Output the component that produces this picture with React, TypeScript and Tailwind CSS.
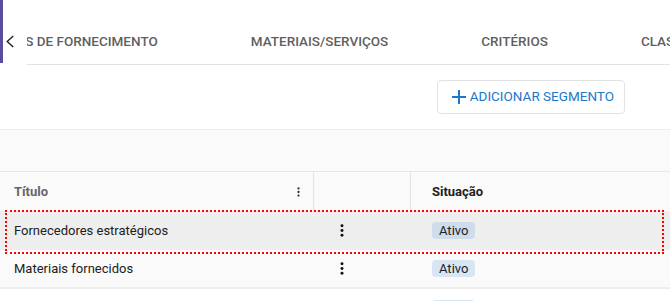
import * as React from 'react';

function Kebab({ className }: { className?: string }) {
  return (
    <svg viewBox="0 0 4 14" className={className} fill="currentColor">
      <circle cx="2" cy="2" r="1.6" />
      <circle cx="2" cy="7" r="1.6" />
      <circle cx="2" cy="12" r="1.6" />
    </svg>
  );
}

const rows = [
  { title: 'Fornecedores estratégicos', status: 'Ativo', active: true },
  { title: 'Materiais fornecidos', status: 'Ativo', active: false },
  { title: 'Segmentação', status: 'Ativo', active: false },
];

export default function App() {
  return (
    <div className="h-[301px] w-[670px] overflow-hidden bg-white font-['Roboto',sans-serif]">
      {/* Tabs */}
      <div className="flex h-[65px]">
        <div className="h-[63px] w-[3px] bg-[#5b4b9c]" />
        <button className="flex w-[24px] items-start justify-start pl-[2px] pt-[35px] text-[#212121]">
          <svg viewBox="0 0 10 14" className="h-[13px] w-[10px]" fill="none" stroke="currentColor" strokeWidth="1.5">
            <polyline points="8.5,1 2,7 8.5,13" />
          </svg>
        </button>
        <div className="flex-1 overflow-hidden border-b border-[#e3e3e3]">
          <div className="-ml-[73px] flex gap-[93px] whitespace-nowrap pt-[33px] text-[13.5px] font-medium leading-[16px] text-[#5f5f5f]">
            <span>SEGMENTOS DE FORNECIMENTO</span>
            <span>MATERIAIS/SERVIÇOS</span>
            <span>CRITÉRIOS</span>
            <span>CLASSIFICAÇÃO</span>
          </div>
        </div>
      </div>

      {/* Toolbar */}
      <div className="flex h-[64px] items-start justify-end pr-[45px] pt-[15px]">
        <button className="flex h-[34px] items-center gap-[4px] rounded-[4px] border border-[#e3e3e3] bg-white pl-[14px] pr-[10px] text-[13.5px] leading-none text-[#1e78c8]">
          <svg viewBox="0 0 14 14" className="h-[14px] w-[14px]" fill="none" stroke="currentColor" strokeWidth="2">
            <line x1="7" y1="0" x2="7" y2="14" />
            <line x1="0" y1="7" x2="14" y2="7" />
          </svg>
          ADICIONAR SEGMENTO
        </button>
      </div>

      {/* Table */}
      <div className="border-t border-[#ececec] bg-[#fafafa]">
        <div className="h-[41px]" />
        <div className="grid h-[40px] grid-cols-[314px_97px_1fr] border-t border-[#e6e6e6] text-[13px] font-bold">
          <div className="flex items-center justify-between border-r border-[#e3e3e3] pl-[14px] pr-[13px] text-[#666666]">
            <span>Título</span>
            <Kebab className="h-[10px] w-[3px] text-[#333]" />
          </div>
          <div className="border-r border-[#e3e3e3]" />
          <div className="flex items-center pl-[21px] text-[#212121]">Situação</div>
        </div>
        {rows.map((r, i) => (
          <div
            key={r.title}
            className={
              'relative grid h-[39px] grid-cols-[314px_97px_1fr] text-[13px] text-[#212121] ' +
              (r.active ? 'bg-[#eeeeee]' : i === 1 ? 'border-b-2 border-[#eeeeee] bg-[#fafafa]' : 'bg-white')
            }
          >
            <div className="flex items-center pl-[14px]">{r.title}</div>
            <div className="flex items-center pl-[26px]">
              <Kebab className="h-[13px] w-[4px] text-[#111]" />
            </div>
            <div className="flex items-center pl-[21px]">
              <span className={'rounded-[4px] px-[7px] py-[1px] leading-[15px] ' + (r.active ? 'bg-[#cfdcea]' : 'bg-[#d8e6f4]')}>
                {r.status}
              </span>
            </div>
            {r.active && (
              <div className="pointer-events-none absolute bottom-[-4px] left-[5px] right-[6px] top-[-1px] z-10 border-2 border-dotted border-[#ff0000]" />
            )}
          </div>
        ))}
      </div>
    </div>
  );
}
